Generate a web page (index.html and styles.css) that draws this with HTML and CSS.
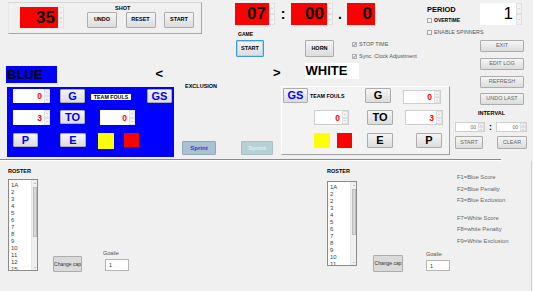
FILE: index.html
```html
<!DOCTYPE html>
<html>
<head>
<meta charset="utf-8">
<link rel="stylesheet" href="styles.css">
</head>
<body>
<div class="form">
  <div class="hdr">
    <div class="shot-group">
      <div class="nud red shot-num"><span class="val big">35</span><span class="spin"><i></i><i class="dn"></i></span></div>
      <div class="shot-ctrl">
        <div class="lbl shot-lbl">SHOT</div>
        <div class="shot-btns">
          <button class="btn b w30">UNDO</button>
          <button class="btn b w30">RESET</button>
          <button class="btn b w30">START</button>
        </div>
      </div>
    </div>
    <div class="clock">
      <div class="nud red c1"><span class="val big">07</span><span class="spin"><i></i><i class="dn"></i></span></div>
      <span class="csep">:</span>
      <div class="nud red c2"><span class="val big">00</span><span class="spin"><i></i><i class="dn"></i></span></div>
      <span class="csep dot">.</span>
      <div class="nud red c3"><span class="val big">0</span></div>
    </div>
    <div class="period">
      <div class="per-lbl">PERIOD</div>
      <div class="chk ot"><span class="box"></span>OVERTIME</div>
      <div class="chk es"><span class="box"></span>ENABLE SPINNERS</div>
    </div>
    <div class="nud white per-box"><span class="val big light">1</span><span class="spin"><i></i><i class="dn"></i></span></div>
  </div>

  <div class="mid">
    <div class="main">
      <div class="game-row">
        <div class="game-col">
          <div class="lbl game-lbl">GAME</div>
          <button class="btn b start-btn">START</button>
        </div>
        <button class="btn b horn">HORN</button>
        <div class="checks">
          <div class="chk"><span class="box on"><svg viewBox="0 0 5 5" width="5" height="5"><polyline points="1,2.6 2,3.6 4,1.2" fill="none" stroke="#5a6fa0" stroke-width="0.9"/></svg></span>STOP TIME</div>
          <div class="chk"><span class="box on"><svg viewBox="0 0 5 5" width="5" height="5"><polyline points="1,2.6 2,3.6 4,1.2" fill="none" stroke="#5a6fa0" stroke-width="0.9"/></svg></span>Sync. Clock Adjustment</div>
        </div>
      </div>

      <div class="teams">
        <div class="blue-team">
          <div class="team-head blue-head">
            <div class="name blue-name">BLUE</div>
            <div class="arrow">&lt;</div>
          </div>
          <div class="blue-panel">
            <div class="prow br1">
              <div class="nud white sm n37"><span class="val">0</span><span class="spin"><i></i><i class="dn"></i></span></div>
              <button class="btn tb blue-t g1">G</button>
              <div class="tf-lbl">TEAM FOULS</div>
              <button class="btn tb blue-t gs1">GS</button>
            </div>
            <div class="prow br2">
              <div class="nud white sm n37 h15"><span class="val">3</span><span class="spin"><i></i><i class="dn"></i></span></div>
              <button class="btn tb blue-t g1">TO</button>
              <div class="nud white sm n35 tf1"><span class="val">0</span><span class="spin"><i></i><i class="dn"></i></span></div>
            </div>
            <div class="prow br3">
              <button class="btn tb blue-t p1">P</button>
              <button class="btn tb blue-t e1">E</button>
              <div class="card yellow y1"></div>
              <div class="card redc r1c"></div>
            </div>
          </div>
        </div>

        <div class="excl">
          <div class="lbl excl-lbl">EXCLUSION</div>
          <div class="sprints">
            <button class="btn sprint">Sprint</button>
            <button class="btn sprint off">Sprint</button>
          </div>
        </div>

        <div class="white-team">
          <div class="team-head white-head">
            <div class="arrow">&gt;</div>
            <div class="name white-name">WHITE</div>
          </div>
          <div class="white-panel">
            <div class="prow wr1">
              <button class="btn tb blue-t gs2">GS</button>
              <div class="tf2">TEAM FOULS</div>
              <button class="btn tb g2">G</button>
              <div class="nud white sm bd n38"><span class="val">0</span><span class="spin"><i></i><i class="dn"></i></span></div>
            </div>
            <div class="prow wr2">
              <div class="nud white sm bd n35 tf3"><span class="val">0</span><span class="spin"><i></i><i class="dn"></i></span></div>
              <button class="btn tb to2">TO</button>
              <div class="nud white sm bd n38 s2"><span class="val">3</span><span class="spin"><i></i><i class="dn"></i></span></div>
            </div>
            <div class="prow wr3">
              <div class="card yellow y2"></div>
              <div class="card redc r2c"></div>
              <button class="btn tb e2">E</button>
              <button class="btn tb p2">P</button>
            </div>
          </div>
        </div>
      </div>
    </div>

    <div class="side">
      <button class="btn sbtn exit">EXIT</button>
      <button class="btn sbtn g6">EDIT LOG</button>
      <button class="btn sbtn g6">REFRESH</button>
      <button class="btn sbtn g5">UNDO LAST</button>
      <div class="lbl int-lbl">INTERVAL</div>
      <div class="int-row">
        <div class="nud white bd int-box"><span class="val iv">00</span><span class="spin"><i></i><i class="dn"></i></span></div>
        <span class="int-sep">:</span>
        <div class="nud white bd int-box w31"><span class="val iv">00</span><span class="spin"><i></i><i class="dn"></i></span></div>
      </div>
      <div class="int-btns">
        <button class="btn sbtn2 int-start">START</button>
        <button class="btn sbtn2 int-clear">CLEAR</button>
      </div>
    </div>
  </div>

  <div class="sep"></div>

  <div class="bottom">
    <div class="roster r1">
      <div class="lbl roster-lbl">ROSTER</div>
      <div class="list">
        <div class="items">
          <div>1A</div><div>2</div><div>3</div><div>4</div><div>5</div><div>6</div><div>7</div><div>8</div><div>9</div><div>10</div><div>11</div><div>12</div><div>15</div>
        </div>
        <div class="sb">
          <span class="arr up"></span>
          <span class="thumb t1"></span>
          <span class="track"></span>
          <span class="arr dn"></span>
        </div>
      </div>
    </div>
    <button class="btn cap cap1">Change cap</button>
    <div class="goalie g-1">
      <div class="goalie-lbl">Goalie</div>
      <div class="goalie-box">1</div>
    </div>

    <div class="roster r2">
      <div class="lbl roster-lbl">ROSTER</div>
      <div class="list">
        <div class="items">
          <div>1A</div><div>2</div><div>2</div><div>3</div><div>4</div><div>5</div><div>6</div><div>7</div><div>8</div><div>9</div><div>10</div><div>11</div>
        </div>
        <div class="sb">
          <span class="arr up"></span>
          <span class="thumb t2"></span>
          <span class="track"></span>
          <span class="arr dn"></span>
        </div>
      </div>
    </div>
    <button class="btn cap cap2">Change cap</button>
    <div class="goalie g-2">
      <div class="goalie-lbl">Goalie</div>
      <div class="goalie-box gb2">1</div>
    </div>

    <div class="keys">
      <div>F1=Blue Score</div>
      <div>F2=Blue Penalty</div>
      <div>F3=Blue Exclusion</div>
      <div class="kgap">F7=White Score</div>
      <div>F8=white Penalty</div>
      <div>F9=White Exclusion</div>
    </div>
  </div>
</div>
</body>
</html>
```

FILE: styles.css
```css
* { box-sizing: border-box; margin: 0; padding: 0; }
html, body { width: 533px; height: 291px; overflow: hidden; }
body {
  background: #f0f0f0;
  font-family: "Liberation Sans", Arial, sans-serif;
  font-size: 5.5px;
  line-height: 6px;
  color: #000;
}
.form { width: 533px; height: 291px; }
button { font-family: inherit; }

.btn {
  display: flex; align-items: center; justify-content: center; flex: none;
  background: linear-gradient(#f5f5f5, #dcdcdc);
  border: 1px solid #acacac; border-radius: 1px;
  font-size: 5.5px; line-height: 1; color: #000; white-space: nowrap;
}
.b { font-weight: bold; }
.lbl { font-weight: bold; font-size: 5.5px; line-height: 6px; }

/* numeric up-down */
.nud { display: flex; flex: none; }
.nud .val {
  flex: 1; display: flex; align-items: center; justify-content: flex-end;
  padding-right: 2px; font-weight: bold; color: #ff0000; font-size: 8.5px;
}
.red .val { background: #ff0000; color: #000; }
.white .val { background: #fff; }
.val.big { font-size: 17px; font-weight: bold; padding-right: 3px; color: #000; }
.val.light { font-weight: normal; }
.spin { width: 6px; display: flex; flex-direction: column; background: #f0f0f0; flex: none; }
.spin i {
  flex: 1; display: flex; align-items: center; justify-content: center;
  border: 1px solid #e0e0e0; background: #f3f3f3;
}
.spin i::after {
  content: ""; width: 0; height: 0;
  border-left: 1.5px solid transparent; border-right: 1.5px solid transparent;
  border-bottom: 1.5px solid #b4b4b4;
}
.spin i.dn::after { border-bottom: 0; border-top: 1.5px solid #b4b4b4; }
.nud.bd { border: 1px solid #cfcfcf; }

/* header */
.hdr { display: flex; align-items: flex-start; height: 30px; }
.shot-group {
  display: flex; align-items: flex-start; flex: none;
  margin: 2px 0 0 8px; width: 194px; height: 32px;
  border: 1px solid #d6d6d6; border-right-color: #a6a6a6; border-bottom-color: #a6a6a6; border-left-color: #e6e6e6;
  position: relative; z-index: 1;
}
.shot-num { margin: 4px 0 0 11px; width: 44px; height: 21px; }
.shot-ctrl { margin-left: 23px; display: flex; flex-direction: column; }
.shot-lbl { margin: 2px 0 0 28px; }
.shot-btns { display: flex; gap: 8.5px; margin-top: 1px; }
.w30 { width: 30px; height: 16px; }

.clock { display: flex; align-items: center; margin: 3px 0 0 33px; height: 22px; flex: none; }
.c1 { width: 40px; height: 22px; }
.c2 { width: 42px; height: 22px; }
.c3 { width: 28px; height: 22px; }
.csep { width: 16px; text-align: center; font-size: 14px; font-weight: bold; line-height: 22px; }
.csep.dot { width: 14px; }

.period { width: 53px; margin: 6px 0 0 52px; flex: none; white-space: nowrap; }
.per-lbl { font-size: 7.5px; font-weight: bold; line-height: 7px; }
.chk { display: flex; align-items: center; gap: 2px; line-height: 7px; color: #555; white-space: nowrap; }
.box { width: 5px; height: 5px; border: 1px solid #a9a9a9; background: #f6f6f6; display: flex; flex: none; }
.box.on { border: 0; background: #f4f4f4; outline: 1px solid #b0b0b0; outline-offset: -1px; }
.ot { margin-top: 4px; color: #000; font-size: 5px; font-weight: bold; }
.es { margin-top: 5px; font-size: 5.3px; }
.per-box { width: 42px; height: 22px; margin-top: 3px; }

/* middle */
.mid { display: flex; height: 129px; }
.main { width: 452px; flex: none; display: flex; flex-direction: column; }
.game-row { display: flex; align-items: flex-start; height: 33px; }
.game-col { margin-left: 236px; display: flex; flex-direction: column; }
.game-lbl { margin: 1px 0 0 2px; font-size: 5px; }
.start-btn { margin-top: 3px; width: 28px; height: 17px; border: 1px solid #3c9bd8; box-shadow: inset 0 0 0 1px #a8d6f2; }
.horn { margin: 10px 0 0 41px; width: 29px; height: 17px; }
.checks { margin: 10.5px 0 0 18px; display: flex; flex-direction: column; gap: 5px; }

.teams { display: flex; height: 96px; }
.team-head { display: flex; align-items: flex-start; }
.name { font-size: 13px; font-weight: bold; line-height: 17px; padding-left: 1px; flex: none; }
.arrow { font-size: 13px; font-weight: bold; line-height: 13px; flex: none; }

.blue-team { margin-left: 7px; width: 167px; display: flex; flex-direction: column; flex: none; }
.blue-head { margin-top: 3px; height: 17px; }
.blue-name { width: 51px; height: 17px; background: #0000ff; margin-left: -1px; }
.blue-head .arrow { margin: 1px 11px 0 auto; }
.blue-panel { margin-top: 4px; height: 70px; background: #0000ff; padding-left: 6px; }

.prow { display: flex; align-items: flex-start; }
.sm { height: 14px; }
.h15 { height: 15px; }
.n37 { width: 37px; }
.n35 { width: 35px; height: 15px; }
.n38 { width: 38px; }
.tb { font-size: 11px; font-weight: bold; width: 25px; height: 14px; }
.blue-t { color: #0000ff; }
.br1 { margin-top: 2px; }
.g1 { margin-left: 10px; }
.tf-lbl { margin: 5px 0 0 6px; background: #fff; font-weight: bold; font-size: 5.3px; line-height: 6px; width: 40px; text-align: center; }
.gs1 { margin-left: 16px; }
.br2 { margin-top: 7px; }
.tf1 { margin-left: 15px; }
.br3 { margin-top: 8px; }
.e1 { margin-left: 22px; width: 26px; }
.card { flex: none; }
.yellow { background: #ffff00; }
.redc { background: #ff0000; }
.y1 { margin-left: 12px; width: 16px; height: 16px; }
.r1c { margin-left: 10px; width: 15px; height: 14px; }

.excl { margin-left: 8px; width: 91px; display: flex; flex-direction: column; flex: none; }
.excl-lbl { margin: 20px 0 0 3px; }
.sprints { display: flex; margin-top: 52px; }
.sprint { width: 34px; height: 14px; background: #a9c2cf; border: 1px solid #93aab6; color: #1a3fd0; font-weight: bold; font-size: 6px; }
.sprint.off { margin-left: 25px; width: 32px; background: #b7d0d4; border-color: #a8c0c4; color: #e6eef0; }

.white-team { width: 177px; display: flex; flex-direction: column; flex: none; }
.white-head { height: 16px; }
.white-head .arrow { margin-top: 3px; }
.white-name { margin-left: 24px; width: 54px; height: 16px; line-height: 16px; background: #fff; }
.white-panel {
  margin: 7px 0 0 8px; width: 169px; height: 69px;
  background: #f3f3f3; border: 1px solid; border-color: #fff #a0a0a0 #a0a0a0 #fff;
}
.wr1 { margin-top: 1px; }
.gs2 { margin-left: 1px; height: 15px; }
.tf2 { width: 57px; margin-top: 5px; padding-left: 2px; font-weight: bold; font-size: 5.3px; }
.g2 { width: 26px; height: 15px; }
.wr1 .n38 { margin: 2px 0 0 12px; }
.wr2 { margin-top: 6px; }
.tf3 { margin-left: 32px; }
.to2 { margin-left: 18px; width: 26px; height: 15px; }
.s2 { margin-left: 12px; height: 15px; }
.wr3 { margin-top: 8px; }
.y2 { margin-left: 32px; width: 16px; height: 15px; }
.r2c { margin-left: 7px; width: 15px; height: 15px; }
.e2 { margin-left: 15px; width: 26px; height: 15px; }
.p2 { margin-left: 23px; width: 26px; height: 15px; }

/* side */
.side { width: 81px; flex: none; display: flex; flex-direction: column; padding-left: 3px; }
.sbtn { margin-left: 25px; width: 44px; height: 12px; color: #666; }
.exit { margin-top: 10px; }
.g6 { margin-top: 6px; }
.g5 { margin-top: 5px; }
.int-lbl { margin: 5px 0 0 23px; }
.int-row { display: flex; align-items: center; margin-top: 6px; }
.int-box { width: 30px; height: 10px; }
.int-box.w31 { width: 31px; }
.val.iv { font-size: 5px; font-weight: normal; color: #666; }
.int-sep { width: 11px; text-align: center; font-weight: bold; font-size: 9px; line-height: 10px; }
.int-btns { display: flex; margin-top: 4px; }
.sbtn2 { width: 28px; height: 13px; color: #666; }
.int-clear { margin-left: 14px; width: 30px; }

.sep { width: 501px; height: 2px; border-top: 1px solid #8a8a8a; border-bottom: 1px solid #fff; }

/* bottom */
.bottom { display: flex; align-items: flex-start; width: 532px; height: 130px; border-right: 1px solid #d2d2d2; }
.roster { display: flex; flex-direction: column; flex: none; }
.r1 { margin-left: 8px; }
.roster-lbl { margin-top: 7px; }
.list { margin-top: 5px; width: 30px; height: 92px; background: #fff; border: 1px solid #8a8a8a; display: flex; overflow: hidden; }
.r2 { margin-left: 198px; }
.r2 .list { margin-top: 7px; height: 85px; }
.items { flex: 1; padding: 1.5px 0 0 2px; line-height: 7px; color: #444; font-size: 6px; }
.sb { width: 6px; display: flex; flex-direction: column; align-items: center; background: #f0f0f0; border-left: 1px solid #e6e6e6; flex: none; }
.sb .arr { height: 6px; display: flex; align-items: center; justify-content: center; }
.sb .arr::after { content: ""; border-left: 1.2px solid transparent; border-right: 1.2px solid transparent; }
.sb .arr.up::after { border-bottom: 1.2px solid #909090; }
.sb .arr.dn::after { border-top: 1.2px solid #909090; }
.sb .thumb { width: 4px; background: #d8d8d8; border: 1px solid #bdbdbd; margin-top: 1px; }
.t1 { height: 50px; }
.t2 { height: 46px; }
.sb .track { flex: 1; }

.cap { background: #dadada; border: 1px solid #adadad; color: #333; font-size: 5px; font-weight: normal; }
.cap1 { margin: 95px 0 0 15px; width: 29px; height: 16px; }
.cap2 { margin: 94px 0 0 16px; width: 30px; height: 17px; }
.goalie { display: flex; flex-direction: column; flex: none; }
.g-1 { margin: 89px 0 0 21px; }
.g-2 { margin: 90px 0 0 23px; }
.goalie-lbl { color: #555; }
.goalie-box { margin: 3px 0 0 2px; width: 24px; height: 12px; background: #fff; border: 1px solid #b5b5b5; padding-left: 3px; display: flex; align-items: center; color: #333; }
.gb2 { margin-left: 0; height: 11px; }

.keys { margin: 11px 0 0 7px; font-size: 5.8px; line-height: 11.5px; color: #666; white-space: nowrap; }
.kgap { margin-top: 6px; }
```
